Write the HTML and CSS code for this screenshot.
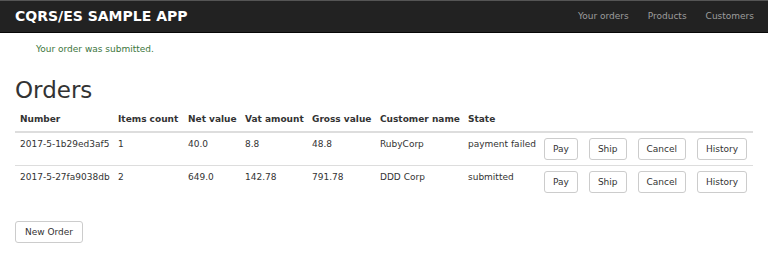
FILE: index.html
```html
<!DOCTYPE html>
<html lang="en">
<head>
    <meta charset="UTF-8">
    <meta name="viewport" content="width=device-width, initial-scale=1.0">
    <title>CQRS/ES Sample App</title>
    <link rel="stylesheet" href="styles.css">
</head>
<body>
    <nav class="navbar">
        <a class="brand" href="#">CQRS/ES SAMPLE APP</a>
        <ul class="nav-links">
            <li><a href="#">Your orders</a></li>
            <li><a href="#">Products</a></li>
            <li><a href="#">Customers</a></li>
        </ul>
    </nav>

    <div class="container">
        <p class="notice">Your order was submitted.</p>

        <h1>Orders</h1>

        <table class="orders">
            <colgroup>
                <col class="col-number">
                <col class="col-items">
                <col class="col-net">
                <col class="col-vat">
                <col class="col-gross">
                <col class="col-customer">
                <col class="col-state">
                <col>
            </colgroup>
            <thead>
                <tr>
                    <th>Number</th>
                    <th>Items count</th>
                    <th>Net value</th>
                    <th>Vat amount</th>
                    <th>Gross value</th>
                    <th>Customer name</th>
                    <th>State</th>
                    <th></th>
                </tr>
            </thead>
            <tbody>
                <tr>
                    <td>2017-5-1b29ed3af5</td>
                    <td>1</td>
                    <td>40.0</td>
                    <td>8.8</td>
                    <td>48.8</td>
                    <td>RubyCorp</td>
                    <td>payment failed</td>
                    <td>
                        <div class="actions">
                            <button class="btn">Pay</button>
                            <button class="btn">Ship</button>
                            <button class="btn">Cancel</button>
                            <button class="btn">History</button>
                        </div>
                    </td>
                </tr>
                <tr>
                    <td>2017-5-27fa9038db</td>
                    <td>2</td>
                    <td>649.0</td>
                    <td>142.78</td>
                    <td>791.78</td>
                    <td>DDD Corp</td>
                    <td>submitted</td>
                    <td>
                        <div class="actions">
                            <button class="btn">Pay</button>
                            <button class="btn">Ship</button>
                            <button class="btn">Cancel</button>
                            <button class="btn">History</button>
                        </div>
                    </td>
                </tr>
            </tbody>
        </table>

        <button class="btn new-order">New Order</button>
    </div>
</body>
</html>
```

FILE: styles.css
```css
body {
    font-family: 'DejaVu Sans', Verdana, sans-serif;
    font-size: 9px;
    line-height: 13px;
    color: #333;
    background-color: #fff;
    margin: 0;
}
a {
    text-decoration: none;
}
.navbar {
    display: flex;
    align-items: center;
    justify-content: space-between;
    height: 31px;
    background-color: #222;
    border-top: 1px solid #555;
    border-bottom: 1px solid #080808;
    padding: 0 14px 0 15px;
}
.brand {
    color: #fff;
    font-size: 14px;
    font-weight: bold;
}
.nav-links {
    display: flex;
    gap: 19px;
    list-style: none;
    margin: 0;
    padding: 0;
}
.nav-links a {
    color: #9d9d9d;
}
.container {
    padding: 0 15px;
}
.notice {
    color: #3c763d;
    margin: 10px 0 0;
    padding-left: 21px;
}
h1 {
    font-size: 23px;
    font-weight: normal;
    line-height: 25px;
    margin: 22px 0 5px;
}
.orders {
    width: 100%;
    border-collapse: collapse;
    table-layout: fixed;
}
.col-number { width: 98px; }
.col-items { width: 70px; }
.col-net { width: 57px; }
.col-vat { width: 67px; }
.col-gross { width: 68px; }
.col-customer { width: 88px; }
.col-state { width: 76px; }
.orders th {
    text-align: left;
    font-weight: bold;
    padding: 5px;
    border-bottom: 2px solid #ddd;
    white-space: nowrap;
}
.orders td {
    padding: 5px;
    vertical-align: top;
    border-top: 1px solid #ddd;
    white-space: nowrap;
}
.orders tbody tr:first-child td {
    border-top: none;
}
.actions {
    display: flex;
    gap: 11px;
}
.btn {
    font-family: inherit;
    font-size: 9px;
    line-height: 12px;
    color: #333;
    background-color: #fff;
    border: 1px solid #ccc;
    border-radius: 3px;
    padding: 4px 8px;
    cursor: pointer;
}
.new-order {
    margin-top: 23px;
    padding: 4px 9px;
}
```
